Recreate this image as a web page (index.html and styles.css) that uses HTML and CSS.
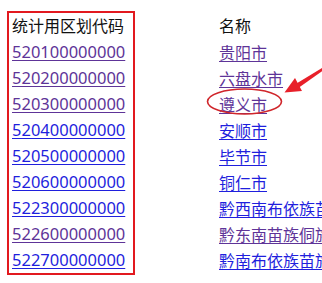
FILE: index.html
```html
<!DOCTYPE html>
<html lang="zh-CN">
<head>
<meta charset="utf-8">
<title>统计用区划代码</title>
<link rel="stylesheet" href="styles.css">
</head>
<body>
<div class="table">
  <div class="col col-code">
    <div class="cell head">统计用区划代码</div>
    <div class="cell code"><a class="seen" href="#">520100000000</a></div>
    <div class="cell code"><a class="seen" href="#">520200000000</a></div>
    <div class="cell code"><a class="seen" href="#">520300000000</a></div>
    <div class="cell code"><a href="#">520400000000</a></div>
    <div class="cell code"><a href="#">520500000000</a></div>
    <div class="cell code"><a href="#">520600000000</a></div>
    <div class="cell code"><a href="#">522300000000</a></div>
    <div class="cell code"><a class="seen" href="#">522600000000</a></div>
    <div class="cell code"><a href="#">522700000000</a></div>
  </div>
  <div class="col col-name">
    <div class="cell head">名称</div>
    <div class="cell"><a class="seen" href="#">贵阳市</a></div>
    <div class="cell"><a class="seen" href="#">六盘水市</a></div>
    <div class="cell"><a class="seen" href="#">遵义市</a></div>
    <div class="cell"><a href="#">安顺市</a></div>
    <div class="cell"><a href="#">毕节市</a></div>
    <div class="cell"><a href="#">铜仁市</a></div>
    <div class="cell"><a href="#">黔西南布依族苗族自治州</a></div>
    <div class="cell"><a class="seen" href="#">黔东南苗族侗族自治州</a></div>
    <div class="cell"><a href="#">黔南布依族苗族自治州</a></div>
  </div>
</div>
<svg class="marks" width="322" height="283" viewBox="0 0 322 283" aria-hidden="true">
  <ellipse cx="244.5" cy="101.5" rx="37" ry="12.5" fill="none" stroke="#d0262b" stroke-width="1.6"/>
  <polygon points="326,65.5 326,68.5 299,87.5 296.5,83.5" fill="#e8202a"/>
  <polygon points="284.5,92.5 295,78 302,91" fill="#e8202a"/>
</svg>
</body>
</html>
```

FILE: styles.css
```css
html, body {
  margin: 0;
  padding: 0;
  background: #fff;
  overflow: hidden;
}

body {
  position: relative;
  width: 322px;
  height: 283px;
  font-family: "Noto Sans CJK SC", "Noto Sans", sans-serif;
  font-size: 16px;
  color: #111;
}

.table {
  display: flex;
  align-items: flex-start;
  padding-top: 11px;
  padding-left: 7px;
  white-space: nowrap;
}

.col {
  display: flex;
  flex-direction: column;
  flex-shrink: 0;
}

.col-code {
  width: 121px;
  border: 2px solid #e2191f;
  padding: 0 0 0 3px;
}

.col-name {
  margin-left: 84px;
  padding-top: 2px;
}

.cell {
  height: 26px;
  line-height: 26px;
}

.head {
  line-height: 24px;
}

.code {
  font-family: "Noto Sans", "Open Sans", sans-serif;
  font-size: 16.5px;
}

a {
  color: #1f1fdd;
  text-decoration: underline;
  text-underline-offset: 2px;
}

a.seen {
  color: #5e3498;
}

.marks {
  position: absolute;
  left: 0;
  top: 0;
  pointer-events: none;
}
```
